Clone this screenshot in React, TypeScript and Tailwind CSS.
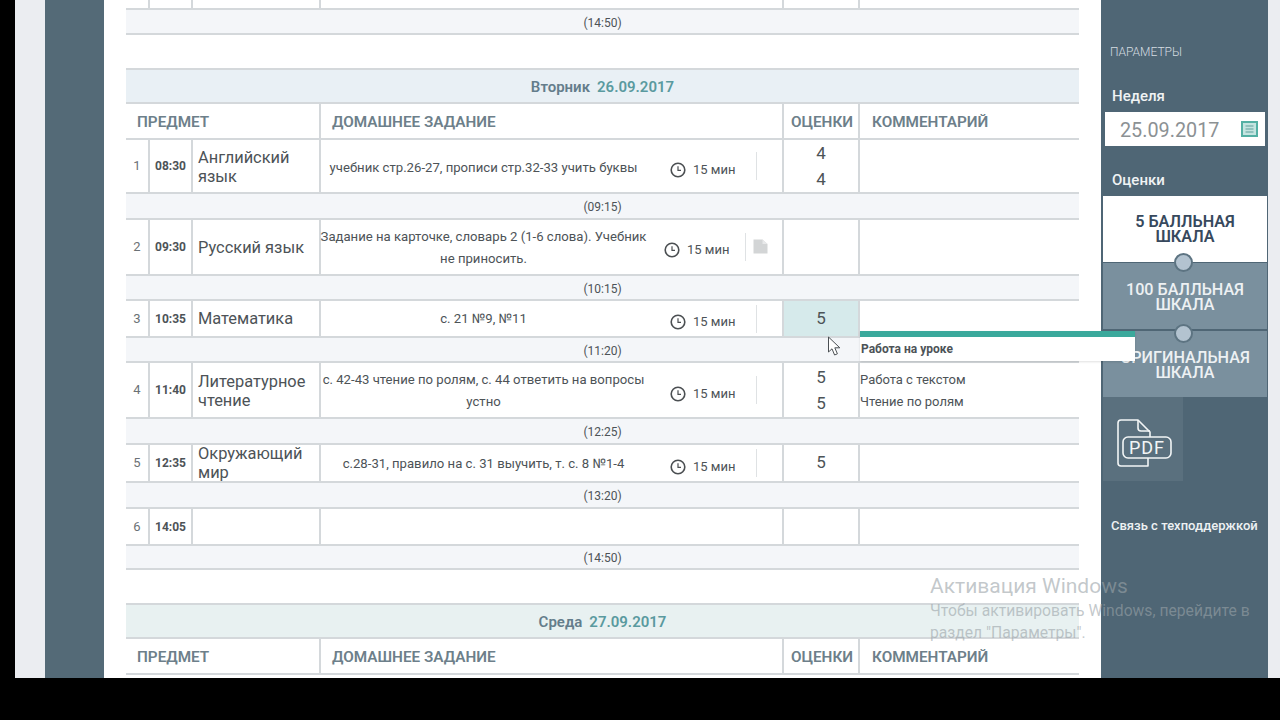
import React from "react";

const line = "border-[#d4d8db]";

function Clock() {
  return (
    <svg width="16" height="16" viewBox="0 0 16 16" fill="none" stroke="#4b4f52" strokeWidth="1.6" className="shrink-0">
      <circle cx="8" cy="8" r="6.8" />
      <path d="M8 4.2V8.4H11" strokeWidth="1.2" />
    </svg>
  );
}

function FileIcon() {
  return (
    <svg width="15" height="15" viewBox="0 0 15 15" className="shrink-0">
      <path d="M0.5 0.5H9.5L14.5 5V14.5H0.5Z" fill="#d3d5d6" />
      <path d="M9.5 0.5L14.5 5H9.5Z" fill="#e8e9ea" />
    </svg>
  );
}

type Row = {
  n: string;
  t: string;
  s?: string[];
  hw?: string[];
  grades?: string[];
  comments?: string[];
  h: string;
  file?: boolean;
  active?: boolean;
  sp?: string;
  hp?: string;
};

function Lesson({ r }: { r: Row }) {
  return (
    <div className={`flex border-b-2 ${line} ${r.h} text-[#4d5357]`}>
      <div className={`w-[24px] shrink-0 border-r-2 ${line} flex items-center justify-center text-[13px] text-[#6b7175]`}>{r.n}</div>
      <div className={`w-[43px] shrink-0 border-r-2 ${line} flex items-center justify-center text-[12px] font-bold`}>{r.t}</div>
      <div className={`w-[128px] shrink-0 border-r-2 ${line} flex flex-col justify-center pl-[5px] text-[16.4px] leading-[19px] ${r.sp ?? ""}`}>
        {r.s?.map((x) => <div key={x}>{x}</div>)}
      </div>
      <div className={`w-[463px] shrink-0 border-r-2 ${line} flex items-center`}>
        <div className={`w-[325px] shrink-0 flex flex-col items-center whitespace-nowrap text-[13.15px] leading-[22px] ${r.hp ?? ""}`}>
          {r.hw?.map((x) => <div key={x}>{x}</div>)}
        </div>
        {r.hw && (
          r.file ? (
            <div className="flex items-center ml-[18px]">
              <div className="flex items-center gap-[7px] mt-[5px]"><Clock /><span className="text-[13px]">15 мин</span></div>
              <div className="w-px h-[28px] bg-[#dfe2e4] ml-[16px]"></div>
              <div className="ml-[7px] -mt-[2px]"><FileIcon /></div>
            </div>
          ) : (
            <div className="flex items-center ml-[24px]">
              <div className="flex items-center gap-[7px] mt-[7px]"><Clock /><span className="text-[13px]">15 мин</span></div>
              <div className="w-px h-[28px] bg-[#dfe2e4] ml-[21px]"></div>
            </div>
          )
        )}
      </div>
      <div className={`w-[76px] shrink-0 border-r-2 ${line} flex flex-col items-center justify-center text-[17px] leading-[26px] ${r.grades?.length === 1 ? "pb-[2px]" : ""} ${r.active ? "bg-[#d6eaeb]" : ""}`}>
        {r.grades?.map((x, i) => <div key={i}>{x}</div>)}
      </div>
      <div className="flex-1 flex flex-col justify-center pt-[2px] text-[13px] leading-[22px]">
        {r.comments?.map((x) => <div key={x}>{x}</div>)}
      </div>
    </div>
  );
}

function Break({ t, h }: { t: string; h: string }) {
  return (
    <div className={`${h} border-b-2 ${line} bg-[#f4f6f9] flex items-center justify-center pt-[2px] text-[12px] text-[#4d5357]`}>{t}</div>
  );
}

function DayHead({ day, date, bg }: { day: string; date: string; bg: string }) {
  return (
    <div className={`h-[36px] border-y-2 ${line} ${bg} flex items-center justify-center gap-[7px] pt-[2px] text-[15px] font-semibold`}>
      <span className="text-[#647d8b]">{day}</span>
      <span className="text-[#5a9a9f]">{date}</span>
    </div>
  );
}

function ColHead({ h }: { h: string }) {
  return (
    <div className={`flex ${h} border-b-2 ${line} text-[15.3px] font-semibold text-[#6d7f8a]`}>
      <div className={`w-[195px] shrink-0 border-r-2 ${line} flex items-center pl-[11px] pt-[2px]`}>ПРЕДМЕТ</div>
      <div className={`w-[463px] shrink-0 border-r-2 ${line} flex items-center pl-[11px] pt-[2px]`}>ДОМАШНЕЕ ЗАДАНИЕ</div>
      <div className={`w-[76px] shrink-0 border-r-2 ${line} flex items-center justify-center pl-[2px] pt-[2px]`}>ОЦЕНКИ</div>
      <div className="flex-1 flex items-center pl-[12px] pt-[2px]">КОММЕНТАРИЙ</div>
    </div>
  );
}

function EmptyCols() {
  return (
    <div className={`flex h-[10px] border-b-2 ${line}`}>
      <div className={`w-[24px] shrink-0 border-r-2 ${line}`}></div>
      <div className={`w-[43px] shrink-0 border-r-2 ${line}`}></div>
      <div className={`w-[128px] shrink-0 border-r-2 ${line}`}></div>
      <div className={`w-[463px] shrink-0 border-r-2 ${line}`}></div>
      <div className={`w-[76px] shrink-0 border-r-2 ${line}`}></div>
    </div>
  );
}

function Scale({ a, b, on }: { a: string; b: string; on?: boolean }) {
  return (
    <div className={`h-[66px] flex flex-col items-center justify-center text-[16.2px] leading-[15.5px] font-medium ${on ? "bg-white text-[#37495d] font-semibold" : "bg-[#7a909e] pt-[2px] text-[#edf1f3]"}`}>
      <div>{a}</div>
      <div>{b}</div>
    </div>
  );
}

const rows: Row[] = [
  { n: "1", t: "08:30", s: ["Английский", "язык"], hw: ["учебник стр.26-27, прописи стр.32-33 учить буквы"], grades: ["4", "4"], h: "h-[54px]", sp: "pt-[2px]", hp: "pt-[4px]" },
  { n: "2", t: "09:30", s: ["Русский язык"], hw: ["Задание на карточке, словарь 2 (1-6 слова). Учебник", "не приносить."], h: "h-[56px]", file: true, hp: "pt-[2px]" },
  { n: "3", t: "10:35", s: ["Математика"], hw: ["с. 21 №9, №11"], grades: ["5"], h: "h-[37px]", active: true },
  { n: "4", t: "11:40", s: ["Литературное", "чтение"], hw: ["с. 42-43 чтение по ролям, с. 44 ответить на вопросы", "устно"], grades: ["5", "5"], comments: ["Работа с текстом", "Чтение по ролям"], h: "h-[56px]", sp: "pt-[2px]", hp: "pt-[2px]" },
  { n: "5", t: "12:35", s: ["Окружающий", "мир"], hw: ["с.28-31, правило на с. 31 выучить, т. с. 8 №1-4"], grades: ["5"], h: "h-[38px]", hp: "pt-[2px]" },
  { n: "6", t: "14:05", h: "h-[37px]" },
];
const breaks = [
  { t: "(09:15)", h: "h-[26px]" },
  { t: "(10:15)", h: "h-[25px]" },
  { t: "(11:20)", h: "h-[25px]" },
  { t: "(12:25)", h: "h-[26px]" },
  { t: "(13:20)", h: "h-[26px]" },
  { t: "(14:50)", h: "h-[24px]" },
];

export default function App() {
  return (
    <div className="h-[720px] w-[1280px] bg-black overflow-hidden" style={{ fontFamily: "Roboto, 'Noto Sans', sans-serif" }}>
      <div className="relative ml-[15px] h-[678px] flex overflow-hidden bg-[#ebedf1]">
        <div className="w-[30px] shrink-0"></div>
        <div className="w-[59px] shrink-0 bg-[#546a77]"></div>

        <main className="w-[997px] shrink-0 bg-white pl-[22px] pr-[22px]">
          <EmptyCols />
          <Break t="(14:50)" h="h-[25px]" />
          <div className="h-[33px]"></div>
          <DayHead day="Вторник" date="26.09.2017" bg="bg-[#e9f0f5]" />
          <ColHead h="h-[36px]" />
          {rows.map((r, i) => (
            <React.Fragment key={r.n}>
              <Lesson r={r} />
              <Break t={breaks[i].t} h={breaks[i].h} />
            </React.Fragment>
          ))}
          <div className="h-[33px]"></div>
          <DayHead day="Среда" date="27.09.2017" bg="bg-[#e8f1f1]" />
          <ColHead h="h-[36px]" />
        </main>

        <aside className="w-[167px] shrink-0 bg-[#4f6675] pl-[2px] pr-[1px] text-white">
          <div className="pt-[45px] pl-[7px] text-[12px] leading-[14px] font-light text-[#d5dde1]">ПАРАМЕТРЫ</div>
          <div className="pt-[28px] pl-[9px] text-[15px] leading-[18px] font-medium text-[#f0f3f4]">Неделя</div>
          <div className="mt-[7px] ml-[2px] mr-[2px] h-[34px] bg-white flex items-center pl-[15px] pr-[7px] justify-between">
            <span className="text-[19.8px] pt-[3px] text-[#8c9194]">25.09.2017</span>
            <svg width="17" height="16" viewBox="0 0 17 16" fill="#c4e4e0" stroke="#54b0a4">
              <rect x="1" y="1" width="15" height="14" strokeWidth="2" />
              <path d="M4.5 5H12.5M4.5 8H12.5M4.5 11H12.5" strokeWidth="1.2" stroke="#5f9f9b" />
            </svg>
          </div>
          <div className="pt-[25px] pl-[9px] text-[15px] leading-[18px] font-medium text-[#f0f3f4]">Оценки</div>
          <div className="mt-[7px] relative flex flex-col">
            <Scale a="5 БАЛЛЬНАЯ" b="ШКАЛА" on />
            <div className="mt-[1px]"><Scale a="100 БАЛЛЬНАЯ" b="ШКАЛА" /></div>
            <div className="mt-[2px]"><Scale a="ОРИГИНАЛЬНАЯ" b="ШКАЛА" /></div>
            <div className="absolute left-[71px] top-[57px] w-[19px] h-[19px] rounded-full bg-[#b3c3d0] border-2 border-[#5d7482]"></div>
            <div className="absolute left-[71px] top-[128px] w-[19px] h-[19px] rounded-full bg-[#b3c3d0] border-2 border-[#5d7482]"></div>
          </div>
          <div className="w-[80px] h-[84px] bg-[#5a707e] pl-[14px] pt-[22px]">
            <svg width="55" height="48" viewBox="0 0 55 48" fill="none" stroke="#f2f5f6" strokeWidth="1.6" strokeLinejoin="round">
              <path d="M31 39V47H4a3 3 0 0 1-3-3V4a3 3 0 0 1 3-3H21L33 13V18" />
              <path d="M21 1V9a3 3 0 0 0 3 3H33" />
              <rect x="6" y="18" width="48" height="21" rx="5" />
              <text x="30" y="35" textAnchor="middle" fontSize="18" letterSpacing="1" fill="#f2f5f6" stroke="none" fontFamily="Roboto, sans-serif">PDF</text>
            </svg>
          </div>
          <div className="pt-[37px] pl-[8px] text-[13px] leading-[16px] font-medium text-[#edf1f3] whitespace-nowrap">Связь с техподдержкой</div>
        </aside>

        <div className="absolute left-[845px] top-[331px] w-[275px] h-[30px] bg-white shadow-[0_1px_2px_rgba(0,0,0,0.12)]">
          <div className="h-[6px] bg-[#3ba99c]"></div>
          <div className="pl-[1px] pt-[5px] text-[12px] leading-[14px] font-bold text-[#4d5357]">Работа на уроке</div>
        </div>

        <svg className="absolute left-[812px] top-[336px]" width="15" height="21" viewBox="0 0 15 21" fill="#ffffff" stroke="#4b5054" strokeWidth="1">
          <path d="M1.5 1V16L5 12.8L7.6 19L10.4 17.8L7.8 11.8H12.8Z" />
        </svg>

        <div className="absolute left-[915px] top-[574px] w-[330px] text-[#9aa3a8]/60">
          <div className="text-[21px] leading-[24px]">Активация Windows</div>
          <div className="text-[15.7px] leading-[22px] mt-[2px]">Чтобы активировать Windows, перейдите в раздел "Параметры".</div>
        </div>
      </div>
    </div>
  );
}
